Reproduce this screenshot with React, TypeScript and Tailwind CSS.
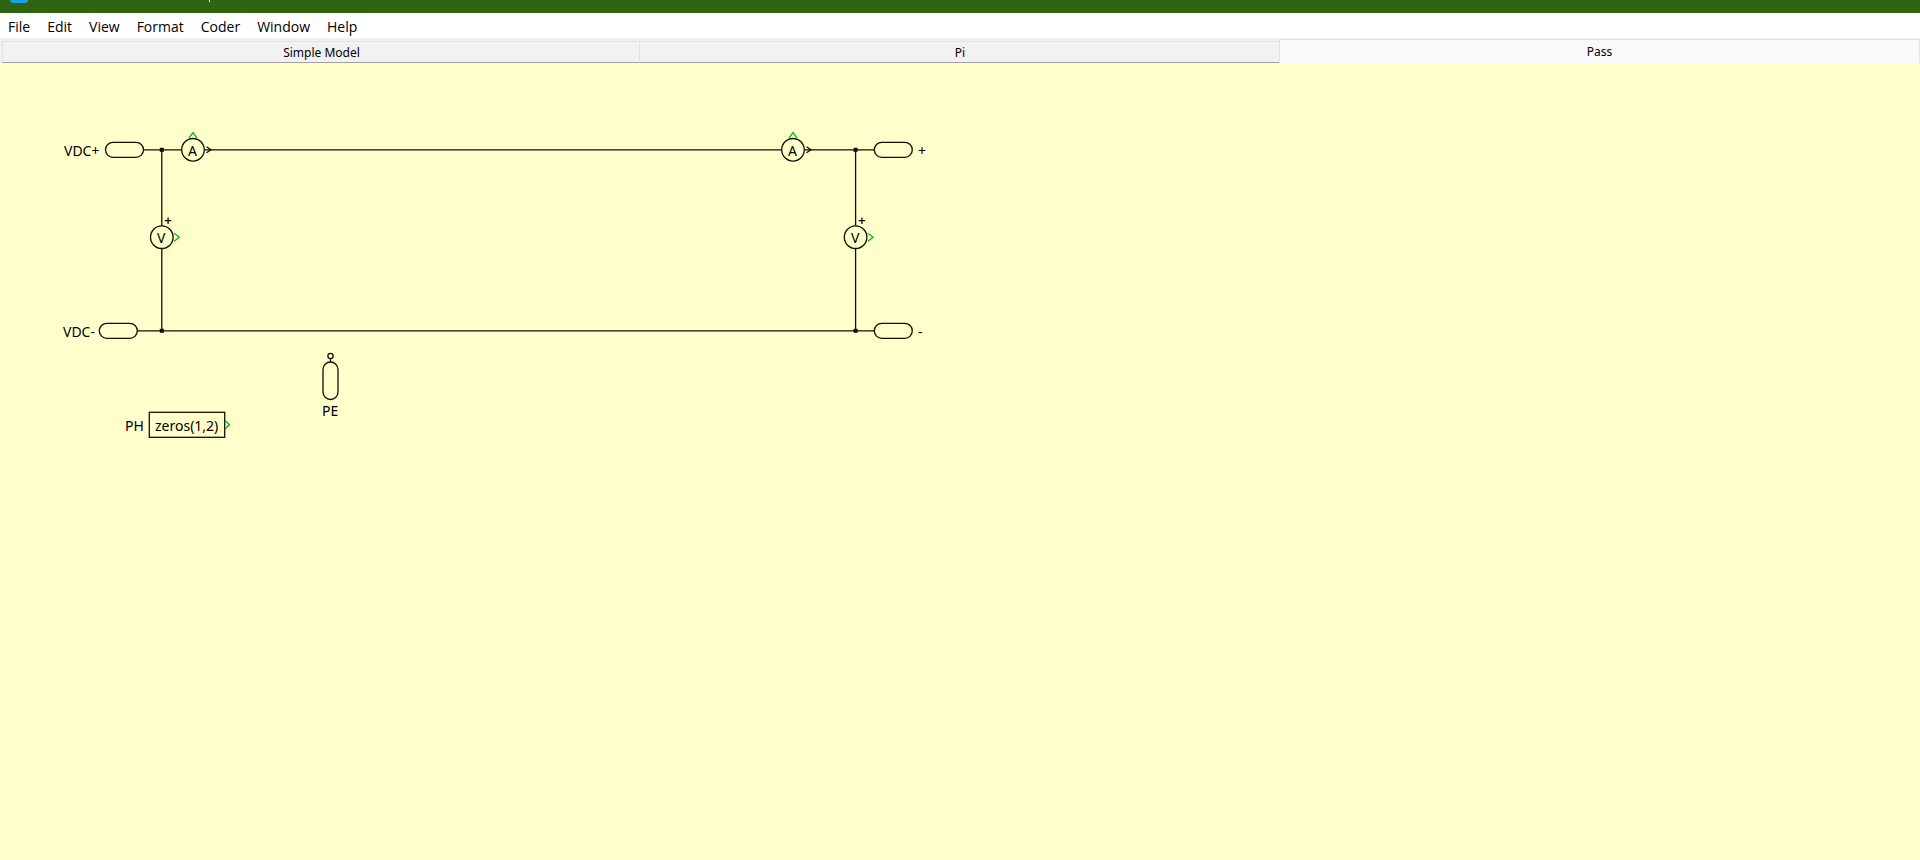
const INK = "#101006";
const SIGNAL = "#00b414";

const menus = ["File", "Edit", "View", "Format", "Coder", "Window", "Help"];

const tabs = [
  { name: "Simple Model", active: false },
  { name: "Pi", active: false },
  { name: "Pass", active: true },
];

function TitleBar() {
  return (
    <header className="flex h-[13px] items-start gap-[181px] overflow-hidden bg-[#306510] pl-[10px]">
      <div className="h-[3px] w-[18px] rounded-b-sm bg-[#1ba1e2]" />
      <div className="h-[2px] w-px bg-white" />
    </header>
  );
}

function MenuBar() {
  return (
    <nav className="flex h-[25px] items-center gap-[17px] bg-white px-2 pt-[2px] font-['Open_Sans','Noto_Sans',sans-serif] text-[14px] leading-[20px] text-black">
      {menus.map((m) => (
        <button key={m} type="button">
          {m}
        </button>
      ))}
    </nav>
  );
}

function TabBar() {
  return (
    <div
      role="tablist"
      className="grid h-[25px] grid-cols-3 items-end bg-[#f0f0f0] font-['Noto_Sans',sans-serif] text-[12px] leading-[16px] text-black"
    >
      {tabs.map((t) => (
        <button
          key={t.name}
          type="button"
          role="tab"
          aria-selected={t.active}
          className={
            t.active
              ? "-ml-px h-[24px] border-x border-t border-[#e2e2e2] bg-[#f9f9f9]"
              : "-ml-px h-[22px] border-b border-l border-t border-[#e2e2e2] border-b-[#a0a0a0] bg-[#f2f2f2] pt-[2px] first:ml-[2px]"
          }
        >
          {t.name}
        </button>
      ))}
    </div>
  );
}

function Port({ x, y }: { x: number; y: number }) {
  return <rect x={x} y={y - 7.5} width={38} height={15} rx={7.5} />;
}

function Ammeter({ x, y }: { x: number; y: number }) {
  return (
    <g>
      <circle cx={x} cy={y} r={11.3} />
      <path d={`M${x + 13.5} ${y - 3}L${x + 18} ${y}L${x + 13.5} ${y + 3}`} />
      <path d={`M${x - 4} ${y - 12}L${x} ${y - 17.3}L${x + 4} ${y - 12}`} stroke={SIGNAL} />
    </g>
  );
}

function Voltmeter({ x, y }: { x: number; y: number }) {
  return (
    <g>
      <circle cx={x} cy={y} r={11.3} />
      <path d={`M${x + 3} ${y - 16.5}h6.6M${x + 6.3} ${y - 19.8}v6.6`} />
      <path d={`M${x + 12.3} ${y - 4}L${x + 17.5} ${y}L${x + 12.3} ${y + 4}`} stroke={SIGNAL} />
    </g>
  );
}

function Junction({ x, y }: { x: number; y: number }) {
  return <rect x={x - 2} y={y - 2} width={4} height={4} fill={INK} stroke="none" />;
}

function Schematic() {
  return (
    <main className="relative flex-1 overflow-hidden bg-[#ffffcc] font-['Noto_Sans',sans-serif] text-[14px] leading-[16px] text-black">
      <svg className="block" width="960" height="400" viewBox="0 0 960 400" fill="none" stroke={INK} strokeWidth="1.3" aria-hidden="true">
        <path d="M143.5 86.8H181.7M204.5 86.8H781.7M804.5 86.8H874M137 267.8H874M161.8 86.8V162.7M161.8 185.5V267.8M855.6 86.8V162.7M855.6 185.5V267.8" />
        <Port x={105.5} y={86.8} />
        <Port x={874.3} y={86.8} />
        <Port x={99.3} y={267.8} />
        <Port x={874.3} y={267.8} />
        <Ammeter x={193} y={86.8} />
        <Ammeter x={793} y={86.8} />
        <Voltmeter x={161.8} y={174.2} />
        <Voltmeter x={855.6} y={174.2} />
        <Junction x={161.8} y={86.8} />
        <Junction x={855.6} y={86.8} />
        <Junction x={161.8} y={267.8} />
        <Junction x={855.6} y={267.8} />
        <circle cx="330.5" cy="293" r="2.6" />
        <path d="M330.5 295.6V299" />
        <rect x="323" y="299" width="15" height="37.5" rx="7.5" />
        <rect x="149.3" y="349.3" width="75.4" height="25" />
        <path d="M225 357.5L229.5 361.8L225 366" stroke={SIGNAL} />
      </svg>
      <span className="absolute left-[64px] top-[80px]">VDC+</span>
      <span className="absolute left-[63px] top-[261px]">VDC-</span>
      <span className="absolute left-[918px] top-[80px]">+</span>
      <span className="absolute left-[918px] top-[261px]">-</span>
      <span className="absolute left-[188px] top-[80px]">A</span>
      <span className="absolute left-[788px] top-[80px]">A</span>
      <span className="absolute left-[157px] top-[167px]">V</span>
      <span className="absolute left-[851px] top-[167px]">V</span>
      <span className="absolute left-[322px] top-[340px]">PE</span>
      <span className="absolute left-[125px] top-[355px]">PH</span>
      <span className="absolute left-[155px] top-[355px]">zeros(1,2)</span>
    </main>
  );
}

export default function App() {
  return (
    <div className="flex min-h-screen flex-col">
      <TitleBar />
      <MenuBar />
      <TabBar />
      <Schematic />
    </div>
  );
}
